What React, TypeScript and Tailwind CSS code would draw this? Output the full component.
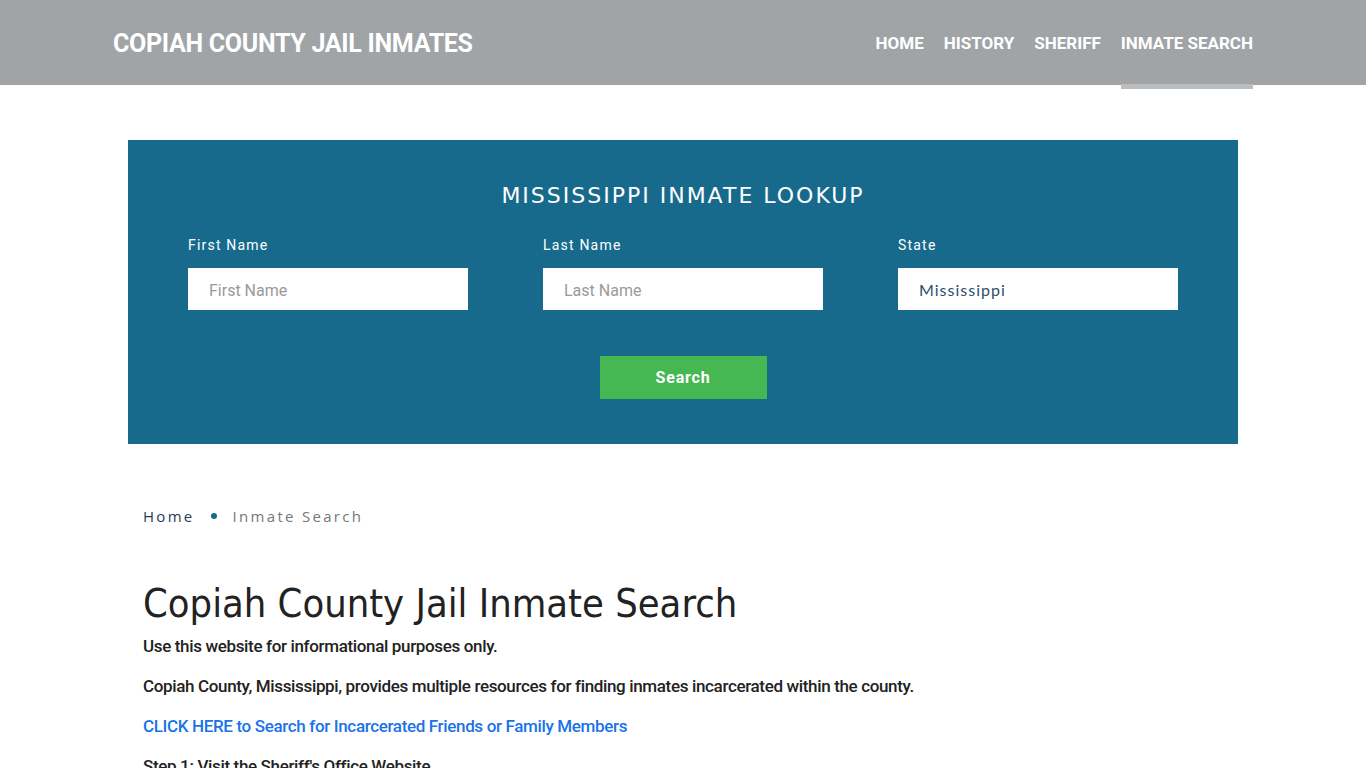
const navItems = ["HOME", "HISTORY", "SHERIFF", "INMATE SEARCH"];

const fields = [
  { label: "First Name", placeholder: "First Name", value: "" },
  { label: "Last Name", placeholder: "Last Name", value: "" },
  { label: "State", placeholder: "", value: "Mississippi" },
];

export default function App() {
  return (
    <div className="min-h-screen bg-white font-['Roboto',sans-serif]">
      <header className="h-[85px] bg-[#a0a4a7]">
        <div className="mx-auto flex h-full max-w-[1140px] items-center justify-between pt-[3px]">
          <a className="text-[25px] font-bold tracking-[-0.3px] text-white">COPIAH COUNTY JAIL INMATES</a>
          <nav className="flex h-full items-center gap-5">
            {navItems.map((item, i) => (
              <a key={item} className="relative flex h-full items-center text-[17px] font-bold text-white">
                {item}
                {i === navItems.length - 1 && (
                  <span className="absolute -bottom-[4px] left-0 right-0 h-[5px] bg-[#bbbdbe]" />
                )}
              </a>
            ))}
          </nav>
        </div>
      </header>

      <main className="mx-auto max-w-[1110px] pt-[55px]">
        <section className="bg-[#176a8c] px-[60px] pb-[45px] pt-[39px]">
          <h2 className="text-center font-['DejaVu_Sans',sans-serif] text-[22px] tracking-[2px] text-white">
            MISSISSIPPI INMATE LOOKUP
          </h2>
          <div className="mt-[23px] grid grid-cols-3 gap-[75px]">
            {fields.map((f) => (
              <label key={f.label} className="flex flex-col">
                <span className="text-[14px] tracking-[1.2px] text-white">{f.label}</span>
                <input
                  readOnly
                  value={f.value}
                  placeholder={f.placeholder}
                  className="mt-[12px] h-[42px] bg-white px-[21px] font-['Lato',sans-serif] text-[16px] tracking-[1px] text-[#2d4f6c] outline-none placeholder:font-['Roboto',sans-serif] placeholder:tracking-normal placeholder:text-[#9a9a9a]"
                />
              </label>
            ))}
          </div>
          <div className="mt-[46px] flex justify-center">
            <button className="h-[43px] w-[167px] bg-[#45b854] text-[16px] font-bold tracking-[0.8px] text-white">
              Search
            </button>
          </div>
        </section>

        <div className="px-[15px]">
          <nav className="mt-[61px] flex items-center font-['Open_Sans',sans-serif] text-[15px] tracking-[2.3px]">
            <a className="text-[#2b3a55]">Home</a>
            <span className="mx-[16px] h-[6px] w-[6px] rounded-full bg-[#176a8c]" />
            <span className="text-[#777]">Inmate Search</span>
          </nav>

          <h1 className="mt-[51px] font-['DejaVu_Sans_Condensed','DejaVu_Sans',sans-serif] text-[39.5px] font-light leading-tight text-[#222]">
            Copiah County Jail Inmate Search
          </h1>
          <div className="mt-[6px] space-y-[16px] text-[17px] font-medium leading-6 tracking-[-0.35px] text-[#222]">
            <p>Use this website for informational purposes only.</p>
            <p>Copiah County, Mississippi, provides multiple resources for finding inmates incarcerated within the county.</p>
            <p>
              <a className="text-[#1a73e8]">CLICK HERE to Search for Incarcerated Friends or Family Members</a>
            </p>
            <p>Step 1: Visit the Sheriff's Office Website</p>
          </div>
        </div>
      </main>
    </div>
  );
}
